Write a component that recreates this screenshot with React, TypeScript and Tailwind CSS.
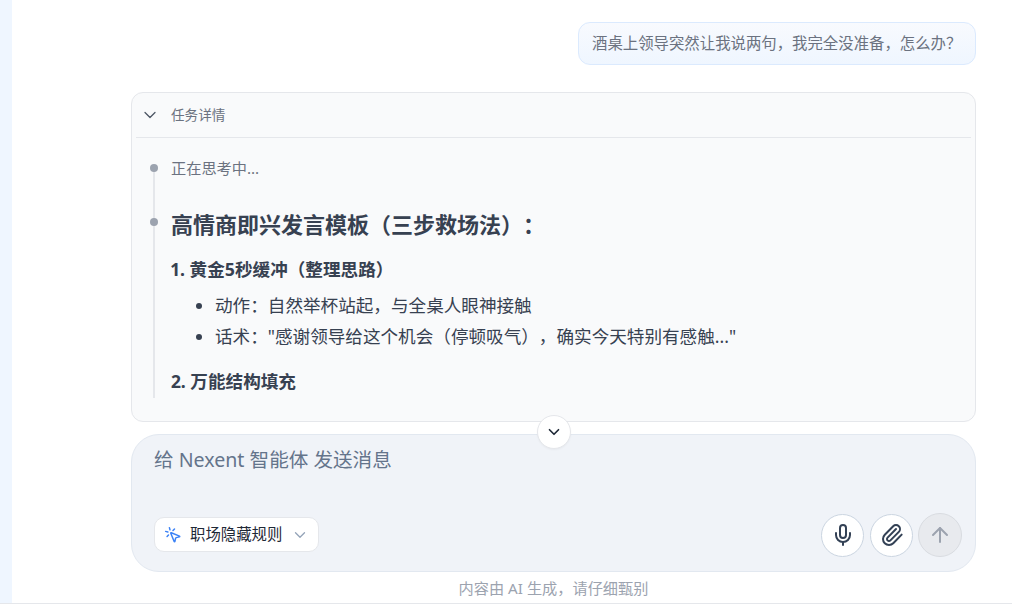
import { ChevronDown, Mic, Paperclip, ArrowUp, MousePointerClick } from "lucide-react";

const font = { fontFamily: '"Noto Sans", "Noto Sans CJK SC", sans-serif' };

export default function App() {
  return (
    <div style={font} className="flex h-[604px] w-[1012px] overflow-hidden border-b border-[#e5e7eb] bg-white [text-spacing-trim:space-all]">
      <div className="w-3 shrink-0 bg-[#eff6ff]" />
      <main className="ml-[119px] flex w-[845px] flex-col pt-[22px]">
        <div className="flex justify-end">
          <div className="flex h-[43px] w-[398px] items-center rounded-xl border border-[#dbeafe] bg-gradient-to-b from-[#f8fafe] to-[#eff6ff] pl-[13px] text-[15.4px] text-[#6b7280]">
            酒桌上领导突然让我说两句，我完全没准备，怎么办？
          </div>
        </div>

        <section className="mt-[27px] h-[330px] overflow-hidden rounded-xl border border-[#e5e7eb] bg-[#f9fafb] px-1">
          <div className="flex h-[45px] items-center border-b border-[#e5e7eb] pl-[4px] text-[#6b7280]">
            <ChevronDown size={20} strokeWidth={1.5} className="text-[#4b5563]" />
            <span className="ml-[11px] text-[13.6px]">任务详情</span>
          </div>
          <div className="relative ml-[35px] pt-[19px]">
            <div className="absolute left-[-18px] top-[30px] h-[230px] w-[2px] bg-[#e5e7eb]" />
            <div className="relative text-[15.2px] leading-[22px] text-[#6b7280]">
              <span className="absolute left-[-21px] top-[7px] h-2 w-2 rounded-full bg-[#9ca3af]" />
              正在思考中...
            </div>
            <div className="relative mt-[28px] text-[22px] font-bold leading-[34px] text-[#374151]">
              <span className="absolute left-[-21px] top-[11px] h-2 w-2 rounded-full bg-[#9ca3af]" />
              高情商即兴发言模板（三步救场法）：
            </div>
            <div className="mt-[15px] text-[17.6px] font-bold leading-[26px] text-[#374151] proportional-nums">1. 黄金5秒缓冲（整理思路）</div>
            <ul className="mt-[8px] list-disc pl-[44px] text-[17.6px] leading-[31px] text-[#374151]">
              <li>动作：自然举杯站起，与全桌人眼神接触</li>
              <li>话术："感谢领导给这个机会（停顿吸气），确实今天特别有感触..."</li>
            </ul>
            <div className="mt-[16px] text-[17.6px] font-bold leading-[26px] text-[#374151] proportional-nums">2. 万能结构填充</div>
          </div>
        </section>

        <div className="relative mt-3 flex h-[138px] flex-col justify-between rounded-[28px] border border-[#e2e8f0] bg-[#f0f3f8] pb-[14px] pl-[22px] pr-[13px] pt-[10px]">
          <button className="absolute left-[405px] top-[-20px] flex h-[34px] w-[34px] items-center justify-center rounded-full border border-[#e5e7eb] bg-white shadow-[0_1px_2px_rgba(0,0,0,0.04)]">
            <ChevronDown size={18} strokeWidth={2.25} className="text-[#1f2937]" />
          </button>
          <div className="text-[19.6px] leading-[30px] text-[#64748b]">给 Nexent 智能体 发送消息</div>
          <div className="flex items-end justify-between">
            <div className="mb-[5px] flex h-[35px] w-[165px] items-center rounded-[10px] border border-[#e5e7eb] bg-white pl-[9px] text-[15.4px] text-[#1f2937]">
              <MousePointerClick size={18} strokeWidth={2} className="text-[#3b82f6]" />
              <span className="ml-[8px]">职场隐藏规则</span>
              <ChevronDown size={18} strokeWidth={1.75} className="ml-[9px] text-[#94a3b8]" />
            </div>
            <div className="flex items-center gap-[5px]">
              <button className="mr-px flex h-[43px] w-[43px] items-center justify-center rounded-full border border-[#cbd5e1] bg-white text-[#334155]">
                <Mic size={24} strokeWidth={2} />
              </button>
              <button className="flex h-[43px] w-[43px] items-center justify-center rounded-full border border-[#cbd5e1] bg-white text-[#334155]">
                <Paperclip size={24} strokeWidth={2} />
              </button>
              <button className="flex h-[44px] w-[44px] items-center justify-center rounded-full border border-[#d9dce1] bg-[#e8eaee] text-[#9ca3af]">
                <ArrowUp size={24} strokeWidth={2} />
              </button>
            </div>
          </div>
        </div>
        <div className="mt-[6px] text-center text-[15.2px] leading-[20px] text-[#9ca3af]">内容由 AI 生成，请仔细甄别</div>
      </main>
    </div>
  );
}
